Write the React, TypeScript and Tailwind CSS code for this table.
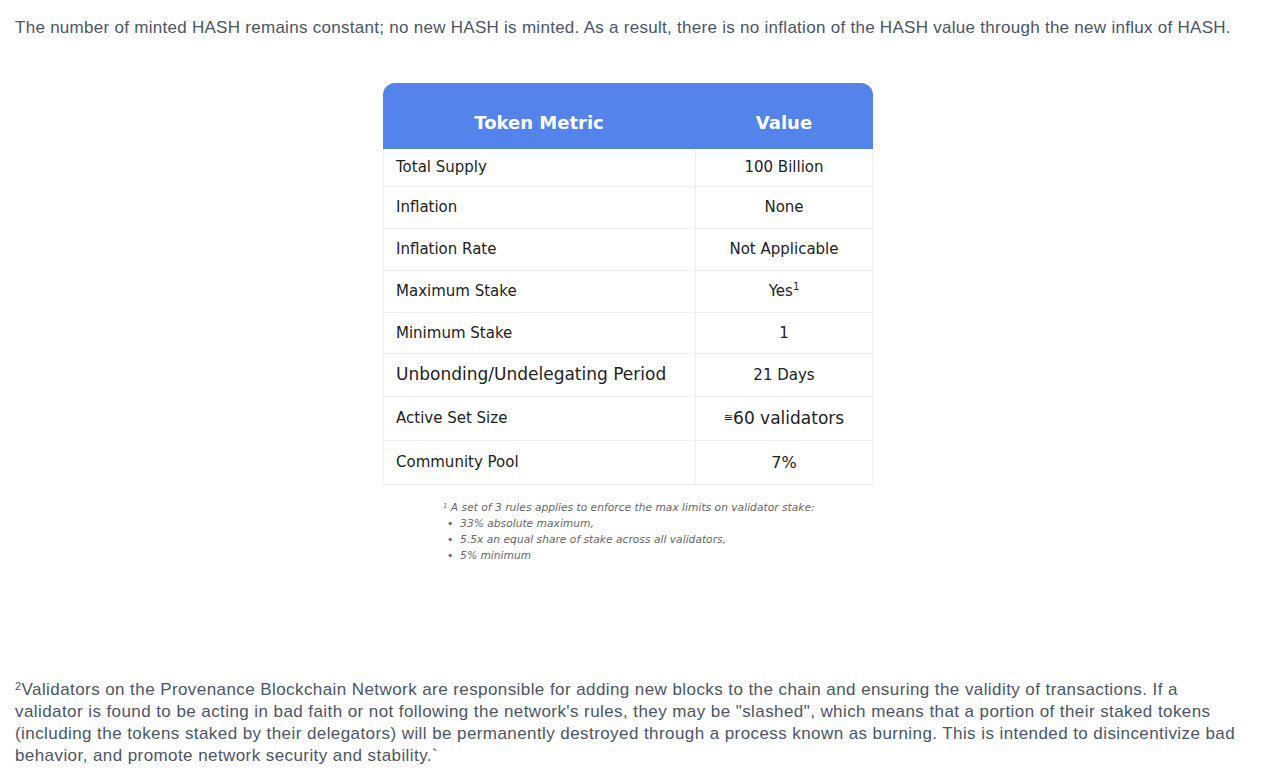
const rows: [string, React.ReactNode][] = [
  ["Total Supply", "100 Billion"],
  ["Inflation", "None"],
  ["Inflation Rate", "Not Applicable"],
  ["Maximum Stake", <>Yes<sup className="text-[10px]">1</sup></>],
  ["Minimum Stake", "1"],
  ["Unbonding/Undelegating Period", "21 Days"],
  ["Active Set Size", <><span className="text-[11px]">≅</span>60 validators</>],
  ["Community Pool", "7%"],
];

const rowHeights = ["h-[38px]", "h-[42px]", "h-[42px]", "h-[42px]", "h-[41px]", "h-[43px]", "h-[44px]", "h-[44px]"];

export default function App() {
  return (
    <div className="min-h-screen bg-white px-[15px] pt-[16px] font-['Liberation_Sans',Arial,sans-serif] text-[#4b5565]">
      <p className="text-[17px] leading-[24px] tracking-[0.28px]">
        The number of minted HASH remains constant; no new HASH is minted. As a result, there is no inflation of the HASH value through the new influx of HASH.
      </p>

      <div className="ml-[368px] mt-[43px] w-[490px] font-['DejaVu_Sans','Open_Sans',sans-serif] text-[#222]">
        <div className="flex h-[66px] items-center rounded-t-[12px] bg-[#5383eb] pt-[12px] text-[18px] font-bold text-white">
          <div className="w-[312px] text-center">Token Metric</div>
          <div className="flex-1 text-center">Value</div>
        </div>
        <div className="border-l border-r border-[#eeeeee]">
          {rows.map(([k, v], i) => (
            <div key={k} className={`flex border-b border-[#eeeeee] ${rowHeights[i]}`}>
              <div className={`flex w-[312px] items-center border-r border-[#eeeeee] pl-[12px] ${i === 5 ? "text-[17px]" : "text-[15px]"}`}>
                {k}
              </div>
              <div className={`flex flex-1 items-center justify-center ${i === 6 ? "text-[17px]" : i === 7 ? "text-[16px]" : "text-[15px]"}`}>
                {v}
              </div>
            </div>
          ))}
        </div>
        <div className="ml-[60px] mt-[15px] text-[10.7px] italic leading-[16px] text-[#666]">
          <div><sup className="text-[7px]">1</sup> A set of 3 rules applies to enforce the max limits on validator stake:</div>
          <div className="pl-[4px]">•&nbsp; 33% absolute maximum,</div>
          <div className="pl-[4px]">•&nbsp; 5.5x an equal share of stake across all validators,</div>
          <div className="pl-[4px]">•&nbsp; 5% minimum</div>
        </div>
      </div>

      <p className="mt-[115px] w-[1228px] text-[17px] leading-[22px] tracking-[0.42px]">
        <span className="inline-block align-top text-[11px] leading-[14px]">2</span>Validators on the Provenance Blockchain Network are responsible for adding new blocks to the chain and ensuring the validity of transactions. If a validator is found to be acting in bad faith or not following the network's rules, they may be "slashed", which means that a portion of their staked tokens (including the tokens staked by their delegators) will be permanently destroyed through a process known as burning. This is intended to disincentivize bad behavior, and promote network security and stability.`
      </p>
    </div>
  );
}
